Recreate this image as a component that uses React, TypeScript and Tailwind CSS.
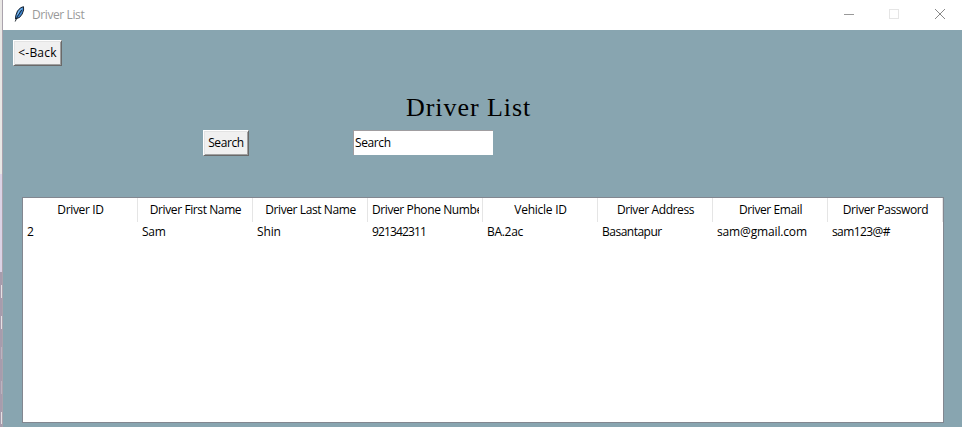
const columns = [
  { title: 'Driver ID', value: '2', head: 'tracking-[-0.35px]', cell: '' },
  { title: 'Driver First Name', value: 'Sam', head: 'tracking-[-0.4px]', cell: 'tracking-[-0.3px]' },
  { title: 'Driver Last Name', value: 'Shin', head: 'tracking-[-0.4px]', cell: 'tracking-[-0.15px]' },
  { title: 'Driver Phone Number', value: '921342311', head: 'tracking-[-0.4px]', cell: 'tracking-[-0.85px]' },
  { title: 'Vehicle ID', value: 'BA.2ac', head: 'tracking-[-0.25px]', cell: 'tracking-[-0.3px]' },
  { title: 'Driver Address', value: 'Basantapur', head: 'tracking-[-0.4px]', cell: 'tracking-[-0.5px]' },
  { title: 'Driver Email', value: 'sam@gmail.com', head: 'tracking-[-0.4px]', cell: 'tracking-[-0.15px]' },
  { title: 'Driver Password', value: 'sam123@#', head: 'tracking-[-0.4px]', cell: 'tracking-[-0.6px]' },
];

function Feather() {
  return (
    <svg width="12" height="16" viewBox="0 0 12 16" className="-mt-[2px] ml-[11px]">
      <path d="M1.5 13 1.8 9.5 3.5 5 6.5 1.8 9.5 .7 9.6 4 8.2 8 5.6 11.4 3 12.4Z" fill="#3d85d0" stroke="#18222e" strokeWidth="1" />
      <path d="M3.6 9 5 5.4 8 2.4" fill="none" stroke="#8fc4ef" strokeWidth="1" />
      <path d="M1.2 15.5 3.5 10.5 7.7 4" fill="none" stroke="#101820" strokeWidth=".9" />
    </svg>
  );
}

function TitleBar() {
  return (
    <header className="flex h-[30px] shrink-0 items-center bg-white">
      <Feather />
      <span className="ml-[6px] flex-1 whitespace-nowrap tracking-[-0.4px] text-[#999]">Driver List</span>
      <svg width="118" height="30" viewBox="0 0 118 30" fill="none" shapeRendering="crispEdges">
        <path d="M0 14.5H10" stroke="#999" />
        <rect x="45.5" y="9.5" width="9" height="9" stroke="#e5e5e5" />
        <path d="M91 9 101 19M101 9 91 19" stroke="#888" shapeRendering="auto" />
      </svg>
    </header>
  );
}

function RaisedButton({ children, className }: { children: string; className: string }) {
  return (
    <button className={`flex h-[26px] items-center justify-center whitespace-nowrap border border-t-white border-l-white border-r-[#696969] border-b-[#696969] bg-[#f0f0f0] shadow-[inset_1px_1px_0_#e3e3e3,inset_-1px_-1px_0_#a0a0a0] ${className}`}>
      {children}
    </button>
  );
}

export default function App() {
  return (
    <div className="flex h-[427px] w-[962px] overflow-hidden bg-[#88a5b0] font-['Open_Sans','Noto_Sans',sans-serif] text-[12px] leading-[16px] text-black">
      <div className="flex w-[3px] shrink-0 flex-col border-r border-[#aaa3ad]">
        <div className="h-[174px] bg-[#e9e7e5]" />
        <div className="h-[98px] bg-[#dcd2e5]" />
        <div className="flex flex-1 flex-col items-end bg-[#a79cad]">
          <i className="mt-[13px] h-[13px] w-px bg-[#e4e0e4]" />
          <i className="mt-[18px] h-[13px] w-px bg-[#e4e0e4]" />
          <i className="mt-[18px] h-[12px] w-px bg-[#bbb3c0]" />
          <i className="mt-[22px] h-[13px] w-px bg-[#bbb3c0]" />
          <i className="mt-[18px] h-[12px] w-px bg-[#e4e0e4]" />
        </div>
      </div>
      <div className="flex min-w-0 flex-1 flex-col">
        <TitleBar />
        <main className="flex flex-col">
          <RaisedButton className="mt-[10px] ml-[10px] w-[49px] tracking-[0.2px]">&lt;-Back</RaisedButton>
          <h1 className="mt-[26px] ml-[403px] h-[32px] whitespace-nowrap font-['Liberation_Serif',serif] text-[26px] leading-[32px] tracking-[0.95px]">Driver List</h1>
          <div className="mt-[6px] flex h-[26px]">
            <RaisedButton className="ml-[200px] w-[46px] tracking-[-0.4px]">Search</RaisedButton>
            <input defaultValue="Search" className="ml-[104px] h-[25px] w-[140px] border-t border-l border-[#a09da0] bg-white pb-[2px] pl-px tracking-[-0.4px] outline-none" />
          </div>
          <section className="mt-[41px] ml-[19px] h-[226px] w-[922px] border border-[#828790] bg-white">
            <div className="flex h-[24px]">
              {columns.map((c) => (
                <div key={c.title} className="w-[115px] border-r border-[#e5e5e5] px-[4px]">
                  <div className={`flex h-[24px] w-[107px] items-center overflow-hidden whitespace-nowrap ${c.title === 'Driver Phone Number' ? 'justify-start' : 'justify-center'} ${c.head}`}>{c.title}</div>
                </div>
              ))}
            </div>
            <div className="flex h-[20px]">
              {columns.map((c) => (
                <div key={c.title} className={`w-[115px] whitespace-nowrap pl-[4px] leading-[20px] ${c.cell}`}>{c.value}</div>
              ))}
            </div>
          </section>
        </main>
      </div>
    </div>
  );
}
